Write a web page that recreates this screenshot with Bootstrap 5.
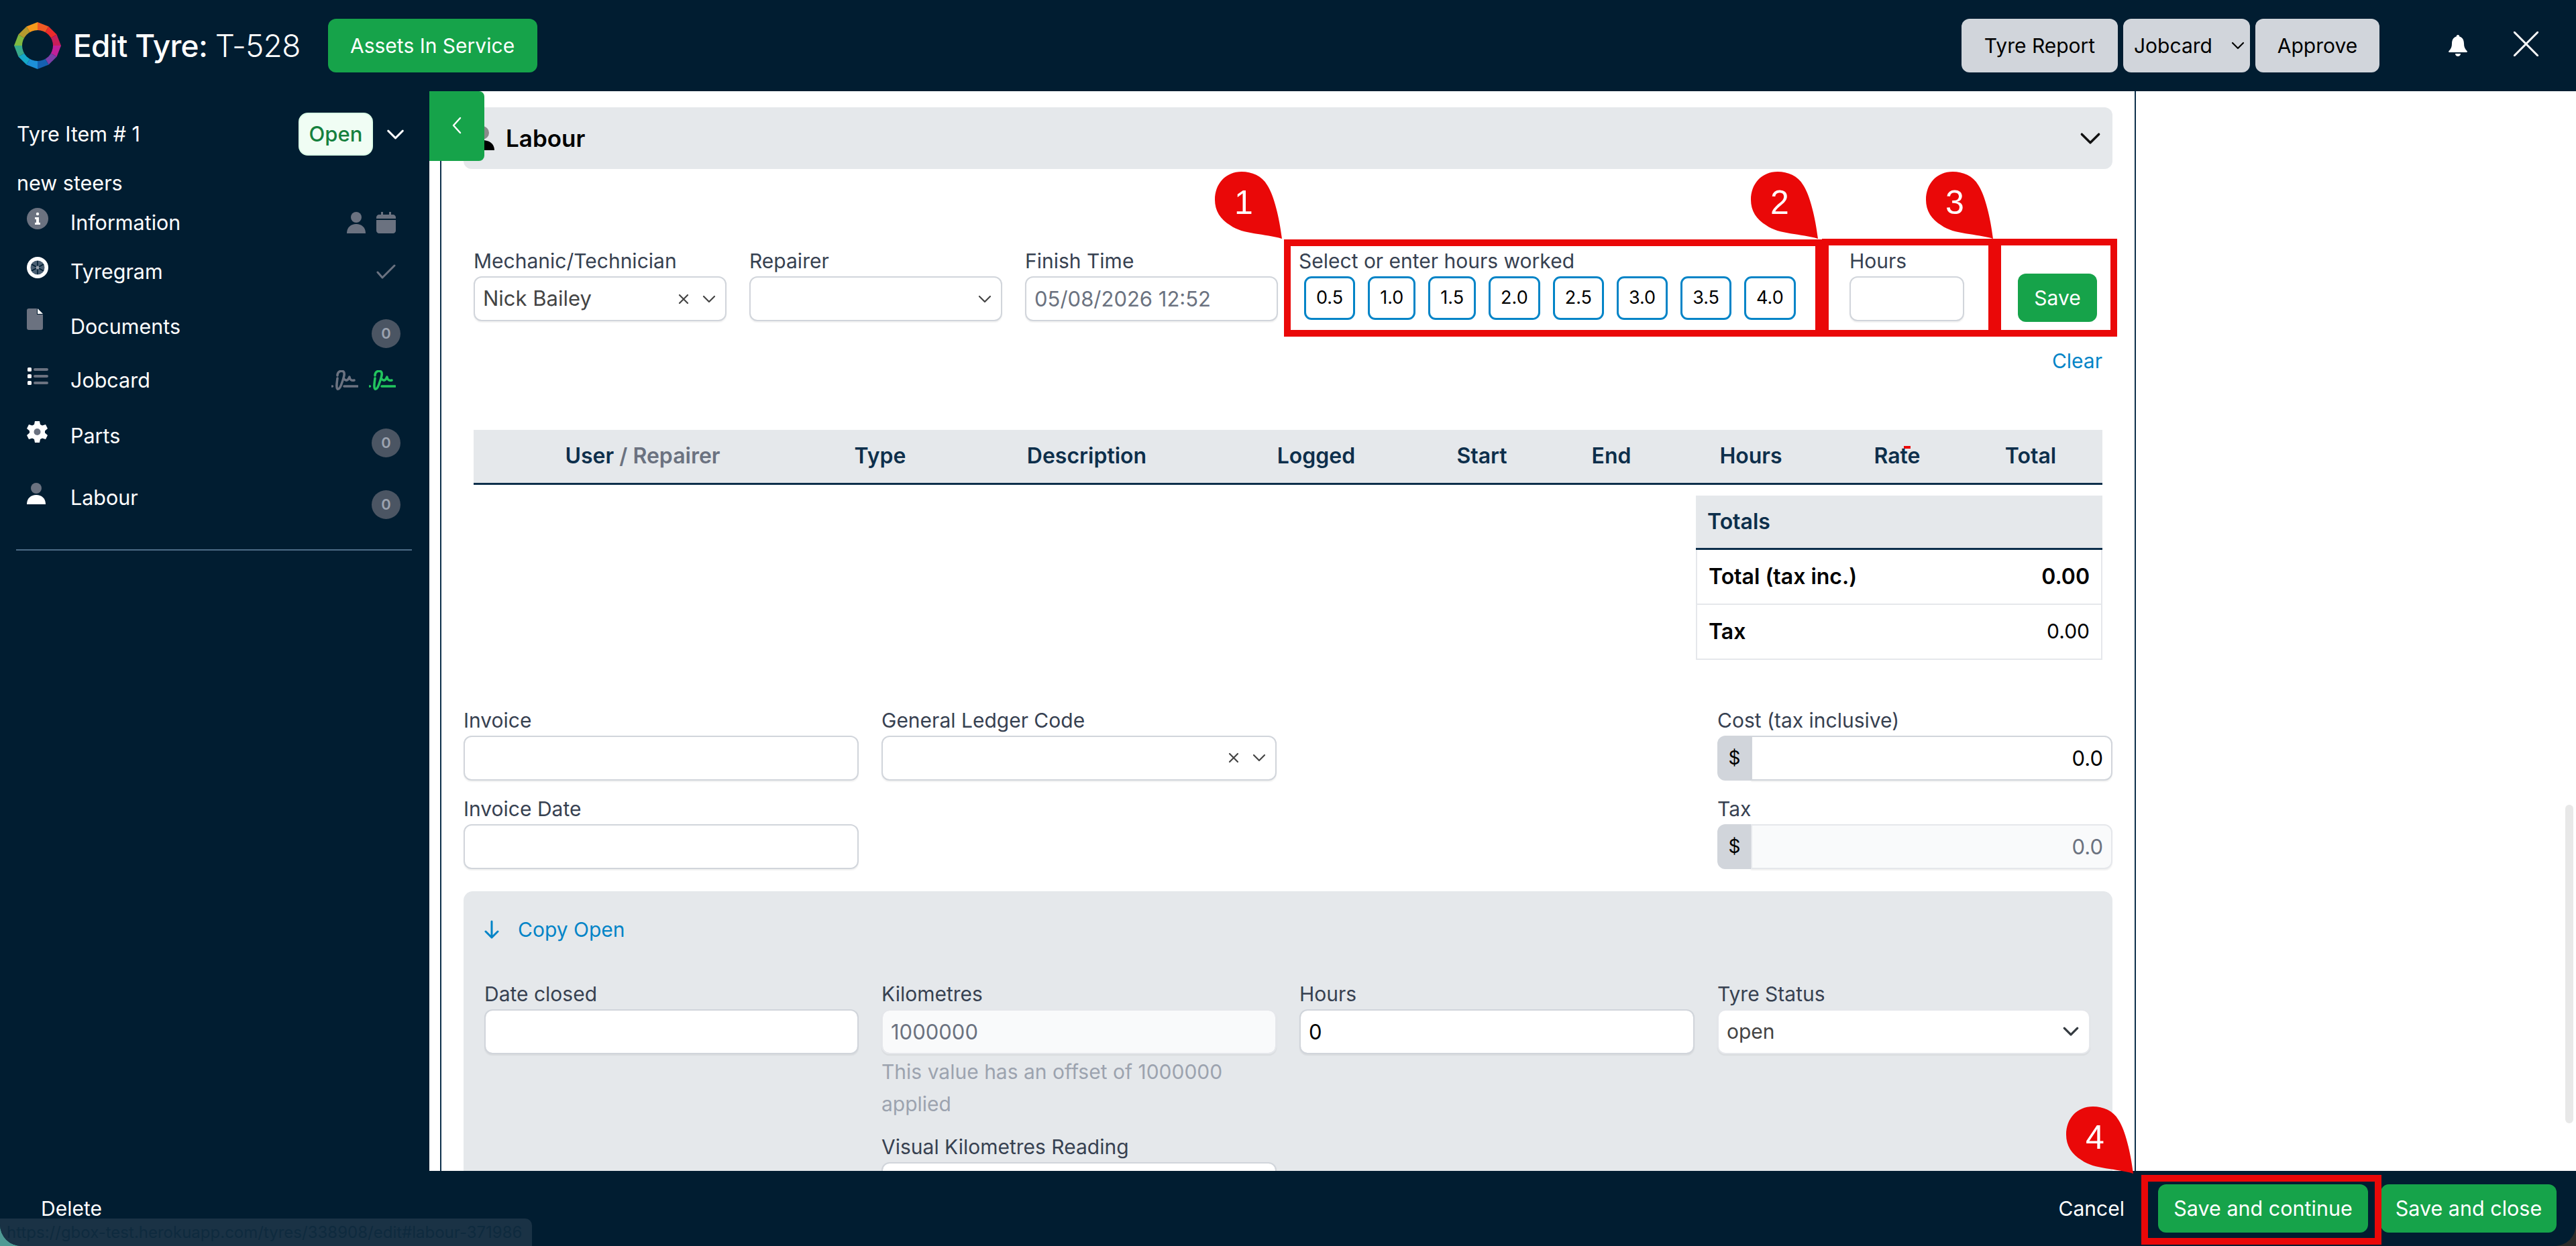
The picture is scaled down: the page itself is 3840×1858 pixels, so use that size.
<!DOCTYPE html>
<html>
<head>
    <meta charset="UTF-8">
    <title>Edit Tyre: T-528</title>
    <link href="https://cdn.jsdelivr.net/npm/bootstrap@5.3.0/dist/css/bootstrap.min.css" rel="stylesheet">
    <style>
        html, body { height: 100%; margin: 0; overflow: hidden; }
        body {
            background: linear-gradient(90deg, #4f9a94 0 50%, #2c2c2a 50% 100%);
            font-family: Inter, "Liberation Sans", sans-serif;
            font-size: 30px;
            color: #000;
        }
        .wk-app { position: relative; width: 3840px; height: 1858px; display: flex; flex-direction: column; overflow: hidden; border-radius: 0 0 32px 32px; background: #011d31; }

        /* header */
        .wk-top { height: 136px; flex: none; padding: 28px 56px 0 21px; color: #fff; }
        .wk-logo { width: 70px; height: 70px; margin-top: 5px; flex: none; }
        .wk-title { margin: 0 0 0 18px; font-size: 46px; font-weight: 500; line-height: 80px; letter-spacing: -.7px; }
        .wk-title span { font-weight: 300; }
        .wk-btn { height: 80px; border: 0; border-radius: 12px; font-size: 30px; padding: 0 24px; white-space: nowrap; }
        .wk-go { background: #16a34a; color: #fff; }
        .wk-go:hover { background: #16a34a; color: #fff; }
        .wk-grey { background: #d1d5db; color: #000; }
        .wk-grey:hover { background: #d1d5db; color: #000; }
        .wk-assets { margin-left: 41px; width: 312px; padding: 0; }
        .wk-report { width: 233px; padding: 0; }
        .wk-job { width: 189px; padding: 0 0 0 16px; }
        .wk-approve { width: 185px; padding: 0; }
        .wk-bell { margin: 24px 69px 0 103px; }
        .wk-x { margin-top: 19px; }

        /* sidebar */
        .wk-mid { flex: 1; display: flex; min-height: 0; }
        .wk-side { width: 640px; flex: none; color: #fff; padding: 32px 0 0 25px; font-size: 30.5px; }
        .wk-open { width: 111px; height: 64px; border-radius: 14px; background: #f0fdf4; border: 2px solid #dcfce7; color: #15803d; font-size: 31px; font-weight: 500; }
        .wk-itemhead { height: 64px; padding-right: 37px; }
        .wk-sub { margin-top: 20px; line-height: 42px; }
        .wk-items { margin: 8px 0 0; padding: 0; list-style: none; }
        .wk-items li { height: 60px; display: flex; align-items: center; padding: 0 43px 0 15px; }
        .wk-items li:nth-child(2) { margin-top: 13px; }
        .wk-items li:nth-child(3) { margin-top: 22px; }
        .wk-items li:nth-child(4) { margin-top: 20px; }
        .wk-items li:nth-child(5) { margin-top: 23px; }
        .wk-items li:nth-child(6) { margin-top: 32px; }
        .wk-ico { width: 65px; flex: none; margin-top: -12px; }
        .wk-ico svg { display: block; }
        .wk-ico-file { margin-top: -22px; }
        .wk-rt { margin-right: 7px; }
        .wk-tag { width: 43px; height: 43px; border-radius: 50%; background: #4b5563; color: #9ca3af; font-size: 22px; font-weight: 600; margin-top: 20px; }
        .wk-line { margin: 47px 26px 0 -1px; height: 2px; background: #4c6b85; }

        /* main */
        .wk-main { position: relative; flex: 1; overflow: hidden; background: #fff; }
        .wk-toggle { position: absolute; left: 0; top: 0; width: 82px; height: 104px; padding-top: 38px; background: #16a34a; border-radius: 0 8px 8px 0; z-index: 2; }
        .wk-paper { margin-left: 16px; width: 2528px; height: 2000px; border-left: 2px solid #0d2f4b; border-right: 2px solid #0d2f4b; padding: 24px 33px 0; }
        .wk-acc { height: 92px; background: #e5e8eb; border-radius: 12px; padding: 0 17px 0 10px; font-size: 35px; font-weight: 600; }
        .wk-acc-ico { margin-right: 17px; flex: none; }

        .wk-form { margin-top: 114px; padding-left: 15px; }
        .wk-fld { width: 377px; margin-right: 34px; }
        .wk-lab { display: block; margin: 0; height: 46px; line-height: 46px; color: #374151; font-size: 30px; white-space: nowrap; }
        .wk-in.form-control { height: 67px; border: 2px solid #d1d5db; border-radius: 12px; box-shadow: 0 2px 2px rgba(0,0,0,.06); font-size: 31px; padding: 0 12px; color: #000; background-color: #fff; }
        .wk-in.wk-off { background-color: #f9fafb; border-color: #e5e7eb; color: #6b7280; }
        .wk-in.wk-pale { color: #6b7280; }
        .wk-in.wk-mock { display: flex; align-items: center; color: #444; padding-right: 14px; }
        .wk-mock .wk-val { flex: 1; }
        .wk-mock svg { flex: none; margin-left: 20px; }
        .wk-hoursel { width: 821px; margin-left: -3px; }
        .wk-hrs { gap: 19px; padding-left: 8px; }
        .wk-hr { height: 65px; border: 3px solid #0284c7; border-radius: 11px; background: #fff; color: #000; font-size: 27px; padding: 0 15px; }
        .wk-hr:hover { background: #fff; color: #000; border-color: #0284c7; }
        .wk-hoursin { width: 171px; margin-right: 80px; }
        .wk-saveb { width: 118px; height: 72px; padding: 0; margin-top: 42px; }
        .wk-clear { margin-top: 38px; padding-right: 15px; line-height: 40px; text-align: right; }
        .wk-clear a, .wk-copy a { color: #0284c7; text-decoration: none; }

        .wk-tbl { margin: 83px 15px 0; width: calc(100% - 30px); table-layout: fixed; color: #0d2f4b; }
        .wk-tbl th { height: 80px; background: #e5e8eb; border-bottom: 3px solid #0d2f4b; text-align: center; vertical-align: middle; font-weight: 600; padding: 0; font-size: 32px; }
        .wk-tbl th span { color: #6b7280; }
        .wk-w1 { width: 504px; } .wk-w2 { width: 204px; } .wk-w3 { width: 412px; } .wk-w4 { width: 272px; } .wk-w5 { width: 222px; }
        .wk-w6 { width: 164px; } .wk-w7 { width: 252px; } .wk-w8 { width: 184px; } .wk-w9 { width: 214px; }

        .wk-totals { margin: 16px 15px 0 auto; width: 606px; font-size: 30px; }
        .wk-tothead { height: 81px; padding: 0 17px; background: #e5e8eb; border-bottom: 3px solid #0d2f4b; color: #0d2f4b; font-weight: 600; font-size: 32px; }
        .wk-totrow { height: 82px; padding: 0 17px; border: 2px solid #e5e7eb; border-top: 0; }
        .wk-totrow b { font-weight: 600; font-size: 32px; }

        .wk-costs { margin-top: 67px; --bs-gutter-x: 34px; --bs-gutter-y: 0; }
        .wk-rowgap { margin-top: 19px; }
        .wk-pre.input-group-text { width: 51px; justify-content: center; padding: 0; background: #d1d5db; border: 0; border-radius: 12px 0 0 12px; color: #000; font-size: 28px; }
        .wk-in.wk-num { text-align: right; }
        .wk-group .wk-in.form-control { border-radius: 0 12px 12px 0; }

        .wk-panel { margin-top: 33px; height: 600px; padding-top: 37px; background: #e5e8eb; border-radius: 14px; }
        .wk-copy { padding-left: 31px; line-height: 40px; }
        .wk-copy svg { margin-right: 28px; }
        .wk-panelrow { margin: 53px -17px 0; --bs-gutter-x: 34px; --bs-gutter-y: 0; }
        .wk-panelrow .wk-first { padding-left: 48px; }
        .wk-panelrow .wk-last { padding-right: 50px; }
        .wk-help { margin: 2px 0 0; line-height: 48px; color: #9ca3af; font-size: 30px; }
        .wk-below { margin-top: 17px; }
        .wk-sel.form-select { height: 67px; border: 2px solid #e5e7eb; border-radius: 12px; font-size: 30px; padding: 0 50px 0 12px; color: #444; background-size: 26px; background-position: right 14px center; box-shadow: 0 2px 2px rgba(0,0,0,.06); }

        /* footer */
        .wk-foot { height: 112px; flex: none; padding: 20px 29px 0 61px; color: #fff; }
        .wk-foot .wk-btn { height: 72px; padding: 0; font-size: 30.5px; }
        .wk-cont { width: 313px; margin: 0 19px 0 50px; }
        .wk-close { width: 262px; }
        .wk-link { line-height: 72px; }
        .wk-status { position: absolute; left: 0; bottom: 0; width: 793px; height: 41px; line-height: 41px; padding-left: 10px; border-radius: 0 10px 0 0; background: #1a3245; color: #0e2a3e; font-size: 24px; white-space: nowrap; z-index: 4; }
        .wk-thumb { position: absolute; left: 3824px; top: 1200px; width: 12px; height: 475px; border-radius: 6px; background: #e8e8e8; }

        /* red callouts drawn on top of the screenshot */
        .wk-box { position: absolute; border: 10px solid #ea0808; z-index: 5; }
        .wk-b1 { left: 1914px; top: 357px; width: 802px; height: 145px; }
        .wk-b2 { left: 2716px; top: 356px; width: 258px; height: 146px; }
        .wk-b3 { left: 2973px; top: 356px; width: 183px; height: 146px; }
        .wk-b4 { left: 3192px; top: 1752px; width: 358px; height: 104px; }
        .wk-pin { position: absolute; width: 100px; height: 100px; z-index: 6; }
        .wk-pin text { font-family: "Liberation Sans", sans-serif; font-size: 50px; fill: #fff; text-anchor: middle; }
        .wk-p1 { left: 1811px; top: 256px; }
        .wk-p2 { left: 2610px; top: 256px; }
        .wk-p3 { left: 2871px; top: 256px; }
        .wk-p4 { left: 3080px; top: 1650px; }
        .wk-speck { position: absolute; left: 2838px; top: 665px; width: 10px; height: 4px; background: #ea0808; z-index: 5; }
    </style>
</head>
<body>
<svg width="0" height="0" class="position-absolute">
    <defs>
        <symbol id="chev" viewBox="0 0 20 12"><path d="M2 2l8 8 8-8" fill="none" stroke="currentColor" stroke-width="2.200" stroke-linecap="round" stroke-linejoin="round"/></symbol>
        <symbol id="cross" viewBox="0 0 16 16"><path d="M2 2l12 12M14 2L2 14" fill="none" stroke="currentColor" stroke-width="2.200" stroke-linecap="round"/></symbol>
        <symbol id="pinshape" viewBox="0 0 100 100"><path d="M100 100C96 68 88 35 78 20 70 6 55 0 40 0 16 0 0 18 0 42c0 16 8 29 23 38 19 14 52 12 77 20z" fill="#ea0808"/></symbol>
        <symbol id="sign" viewBox="0 0 40 30"><path d="M1 24h.5M9 8C9 2 14 0 18 2c3 3 0 10-2 16-2 6-4 11-7 10-2-2-1-8 0-16M19 13c3 4 6 2 8-3 0 4 3 6 7 5M19 24h20" fill="none" stroke="currentColor" stroke-width="3.500" stroke-linecap="round" stroke-linejoin="round"/></symbol>
    </defs>
</svg>

<div class="wk-app">
    <header class="wk-top d-flex align-items-start">
        <svg class="wk-logo" viewBox="0 0 70 70">
            <polygon points="35,35 35,0 51.5,6.4" fill="#ef5a24"/>
            <polygon points="35,35 51.5,6.4 63.6,18.5" fill="#ee2b2b"/>
            <polygon points="35,35 63.6,18.5 70,35" fill="#c81e5a"/>
            <polygon points="35,35 70,35 63.6,51.5" fill="#c0209a"/>
            <polygon points="35,35 63.6,51.5 51.5,63.6" fill="#7a3fa8"/>
            <polygon points="35,35 51.5,63.6 35,70" fill="#1560b0"/>
            <polygon points="35,35 35,70 18.5,63.6" fill="#1d8fd8"/>
            <polygon points="35,35 18.5,63.6 6.4,51.5" fill="#15a8c8"/>
            <polygon points="35,35 6.4,51.5 0,35" fill="#38a98a"/>
            <polygon points="35,35 0,35 6.4,18.5" fill="#7fb841"/>
            <polygon points="35,35 6.4,18.5 18.5,6.4" fill="#b59a2e"/>
            <polygon points="35,35 18.5,6.4 35,0" fill="#f59a1c"/>
            <circle cx="35" cy="35" r="23" fill="#011d31"/>
        </svg>
        <h1 class="wk-title">Edit Tyre: <span>T-528</span></h1>
        <button class="btn wk-btn wk-go wk-assets">Assets In Service</button>
        <div class="ms-auto d-flex align-items-start gap-2">
            <button class="btn wk-btn wk-grey wk-report">Tyre Report</button>
            <button class="btn wk-btn wk-grey wk-job d-flex align-items-center text-start">Jobcard
                <svg class="ms-auto me-2" width="20" height="12"><use href="#chev"/></svg>
            </button>
            <button class="btn wk-btn wk-grey wk-approve">Approve</button>
        </div>
        <svg class="wk-bell" width="28" height="32" viewBox="0 0 28 32" fill="#fff">
            <path d="M14 0c1.500 0 2.300 1 2.300 2.500C21 3.800 23 8 23 13c0 5 1.500 8 4.500 11 .8 1 .3 2-1 2H1.500c-1.300 0-1.800-1-1-2C3.500 21 5 18 5 13c0-5 2-9.200 6.700-10.500C11.700 1 12.500 0 14 0zM10 28h8c0 2.500-2 4-4 4s-4-1.500-4-4z"/>
        </svg>
        <svg class="wk-x" width="37" height="37" viewBox="0 0 37 37"><path d="M1 1l35 35M36 1L1 36" stroke="#fff" stroke-width="3" stroke-linecap="round"/></svg>
    </header>

    <div class="wk-mid">
        <aside class="wk-side">
            <div class="wk-itemhead d-flex align-items-center">
                <span class="me-auto">Tyre Item # 1</span>
                <span class="wk-open d-flex align-items-center justify-content-center">Open</span>
                <svg class="ms-3 ps-1" width="31" height="17"><use href="#chev"/></svg>
            </div>
            <div class="wk-sub">new steers</div>
            <ul class="wk-items">
                <li>
                    <span class="wk-ico"><svg width="32" height="32" viewBox="0 0 32 32"><circle cx="16" cy="16" r="16" fill="#6b7280"/><circle cx="16" cy="9" r="2.200" fill="#fff"/><path d="M12 14h6v8h2v3h-8v-3h2v-5h-2z" fill="#fff"/></svg></span>
                    <span class="me-auto">Information</span>
                    <svg class="me-3" width="28" height="32" viewBox="0 0 28 32" fill="#6b7280"><circle cx="14" cy="8" r="8"/><path d="M0 32c0-9 6-14 14-14s14 5 14 14z"/></svg>
                    <svg class="wk-rt" width="29" height="32" viewBox="0 0 29 32" fill="#6b7280"><path d="M7 0h3v4h9V0h3v4h3c2 0 4 2 4 4v2H0V8c0-2 2-4 4-4h3zM0 12h29v16c0 2-2 4-4 4H4c-2 0-4-2-4-4z"/></svg>
                </li>
                <li>
                    <span class="wk-ico"><svg width="32" height="32" viewBox="0 0 32 32"><circle cx="16" cy="16" r="16" fill="#fff"/><circle cx="16" cy="16" r="10.500" fill="#4b5f73"/><path d="M16 6v20M7 11l18 10M25 11L7 21" stroke="#011d31" stroke-width="1.500"/><circle cx="16" cy="16" r="2.500" fill="#9ca3af"/></svg></span>
                    <span class="me-auto">Tyregram</span>
                    <svg class="wk-rt" width="29" height="22" viewBox="0 0 29 22"><path d="M2 12l7 8L27 2" fill="none" stroke="#6b7280" stroke-width="3" stroke-linecap="round" stroke-linejoin="round"/></svg>
                </li>
                <li>
                    <span class="wk-ico wk-ico-file"><svg width="24" height="32" viewBox="0 0 24 32"><path d="M3 0h12v9h9v20c0 2-1 3-3 3H3c-2 0-3-1-3-3V3c0-2 1-3 3-3z" fill="#6b7280"/><path d="M16 0l8 8h-8z" fill="#fff"/></svg></span>
                    <span class="me-auto">Documents</span>
                    <span class="wk-tag d-flex align-items-center justify-content-center">0</span>
                </li>
                <li>
                    <span class="wk-ico"><svg width="32" height="26" viewBox="0 0 32 26"><rect x="1" y="0" width="6" height="6" rx="1.500" fill="#fff"/><rect x="1" y="10" width="6" height="6" rx="1.500" fill="#fff"/><rect x="1" y="20" width="6" height="6" rx="1.500" fill="#fff"/><rect x="10" y="1" width="22" height="4" rx="2" fill="#6b7280"/><rect x="10" y="11" width="22" height="4" rx="2" fill="#6b7280"/><rect x="10" y="21" width="22" height="4" rx="2" fill="#6b7280"/></svg></span>
                    <span class="me-auto">Jobcard</span>
                    <svg class="me-3" width="40" height="30" color="#6b7280"><use href="#sign"/></svg>
                    <svg class="wk-rt" width="40" height="30" color="#22c55e"><use href="#sign"/></svg>
                </li>
                <li>
                    <span class="wk-ico"><svg width="31" height="32" viewBox="0 0 31 32"><path d="M12 0h7l1 5 3 1.500 5-1.500 3 6-4 3.500v3l4 3.500-3 6-5-1.500-3 1.500-1 5h-7l-1-5-3-1.500-5 1.500-3-6 4-3.500v-3l-4-3.500 3-6 5 1.500 3-1.500z" fill="#fff"/><circle cx="15.500" cy="16" r="5" fill="#6b7280"/></svg></span>
                    <span class="me-auto">Parts</span>
                    <span class="wk-tag d-flex align-items-center justify-content-center">0</span>
                </li>
                <li>
                    <span class="wk-ico"><svg width="28" height="32" viewBox="0 0 28 32"><circle cx="14" cy="8" r="8" fill="#6b7280"/><path d="M0 32c0-9 6-14 14-14s14 5 14 14z" fill="#fff"/></svg></span>
                    <span class="me-auto">Labour</span>
                    <span class="wk-tag d-flex align-items-center justify-content-center">0</span>
                </li>
            </ul>
            <div class="wk-line"></div>
        </aside>

        <main class="wk-main">
            <div class="wk-toggle d-flex align-items-start justify-content-center">
                <svg width="14" height="26" viewBox="0 0 14 26"><path d="M12 2L2 13l10 11" fill="none" stroke="#fff" stroke-width="2.500" stroke-linecap="round" stroke-linejoin="round"/></svg>
            </div>
            <div class="wk-paper">
                <div class="wk-acc d-flex align-items-center">
                    <svg class="wk-acc-ico" width="36" height="36" viewBox="0 0 36 36"><circle cx="18" cy="10" r="10" fill="#8a8a8a"/><path d="M0 36c0-10 8-15 18-15s18 5 18 15z" fill="#000"/></svg>
                    <span class="me-auto">Labour</span>
                    <svg width="32" height="19" color="#111"><use href="#chev"/></svg>
                </div>

                <div class="wk-form d-flex align-items-start">
                    <div class="wk-fld">
                        <label class="wk-lab">Mechanic/Technician</label>
                        <div class="form-control wk-in wk-mock">
                            <span class="wk-val">Nick Bailey</span>
                            <svg width="16" height="16"><use href="#cross"/></svg>
                            <svg width="20" height="12"><use href="#chev"/></svg>
                        </div>
                    </div>
                    <div class="wk-fld">
                        <label class="wk-lab">Repairer</label>
                        <div class="form-control wk-in wk-mock">
                            <span class="wk-val"></span>
                            <svg width="20" height="12"><use href="#chev"/></svg>
                        </div>
                    </div>
                    <div class="wk-fld">
                        <label class="wk-lab">Finish Time</label>
                        <input class="form-control wk-in wk-pale" value="05/08/2026 12:52">
                    </div>
                    <div class="wk-hoursel">
                        <label class="wk-lab">Select or enter hours worked</label>
                        <div class="wk-hrs d-flex">
                            <button class="btn wk-hr">0.5</button>
                            <button class="btn wk-hr">1.0</button>
                            <button class="btn wk-hr">1.5</button>
                            <button class="btn wk-hr">2.0</button>
                            <button class="btn wk-hr">2.5</button>
                            <button class="btn wk-hr">3.0</button>
                            <button class="btn wk-hr">3.5</button>
                            <button class="btn wk-hr">4.0</button>
                        </div>
                    </div>
                    <div class="wk-hoursin">
                        <label class="wk-lab">Hours</label>
                        <input class="form-control wk-in">
                    </div>
                    <button class="btn wk-btn wk-go wk-saveb">Save</button>
                </div>

                <div class="wk-clear"><a href="#">Clear</a></div>

                <table class="wk-tbl">
                    <thead>
                        <tr>
                            <th class="wk-w1">User <span>/ Repairer</span></th>
                            <th class="wk-w2">Type</th>
                            <th class="wk-w3">Description</th>
                            <th class="wk-w4">Logged</th>
                            <th class="wk-w5">Start</th>
                            <th class="wk-w6">End</th>
                            <th class="wk-w7">Hours</th>
                            <th class="wk-w8">Rate</th>
                            <th class="wk-w9">Total</th>
                        </tr>
                    </thead>
                </table>

                <div class="wk-totals">
                    <div class="wk-tothead d-flex align-items-center">Totals</div>
                    <div class="wk-totrow d-flex align-items-center justify-content-between"><b>Total (tax inc.)</b><b>0.00</b></div>
                    <div class="wk-totrow d-flex align-items-center justify-content-between"><b>Tax</b><span>0.00</span></div>
                </div>

                <div class="row wk-costs">
                    <div class="col-3">
                        <label class="wk-lab">Invoice</label>
                        <input class="form-control wk-in">
                    </div>
                    <div class="col-3">
                        <label class="wk-lab">General Ledger Code</label>
                        <div class="form-control wk-in wk-mock">
                            <span class="wk-val"></span>
                            <svg width="16" height="16"><use href="#cross"/></svg>
                            <svg width="20" height="12"><use href="#chev"/></svg>
                        </div>
                    </div>
                    <div class="col-3"></div>
                    <div class="col-3">
                        <label class="wk-lab">Cost (tax inclusive)</label>
                        <div class="input-group wk-group">
                            <span class="input-group-text wk-pre">$</span>
                            <input class="form-control wk-in wk-num" value="0.0">
                        </div>
                    </div>
                    <div class="col-3 wk-rowgap">
                        <label class="wk-lab">Invoice Date</label>
                        <input class="form-control wk-in">
                    </div>
                    <div class="col-3 offset-6 wk-rowgap">
                        <label class="wk-lab">Tax</label>
                        <div class="input-group wk-group">
                            <span class="input-group-text wk-pre">$</span>
                            <input class="form-control wk-in wk-num wk-off" value="0.0">
                        </div>
                    </div>
                </div>

                <div class="wk-panel">
                    <div class="wk-copy d-flex align-items-center">
                        <svg width="22" height="28" viewBox="0 0 22 28"><path d="M11 2v24M2 17l9 9 9-9" fill="none" stroke="#0284c7" stroke-width="3" stroke-linecap="round" stroke-linejoin="round"/></svg>
                        <a href="#">Copy Open</a>
                    </div>
                    <div class="row wk-panelrow">
                        <div class="col-3 wk-first">
                            <label class="wk-lab">Date closed</label>
                            <input class="form-control wk-in">
                        </div>
                        <div class="col-3">
                            <label class="wk-lab">Kilometres</label>
                            <input class="form-control wk-in wk-off" value="1000000">
                            <p class="wk-help">This value has an offset of 1000000 applied</p>
                            <label class="wk-lab wk-below">Visual Kilometres Reading</label>
                            <input class="form-control wk-in">
                        </div>
                        <div class="col-3">
                            <label class="wk-lab">Hours</label>
                            <input class="form-control wk-in" value="0">
                        </div>
                        <div class="col-3 wk-last">
                            <label class="wk-lab">Tyre Status</label>
                            <select class="form-select wk-sel"><option>open</option></select>
                        </div>
                    </div>
                </div>
            </div>
        </main>
    </div>

    <footer class="wk-foot d-flex align-items-start">
        <span class="wk-link me-auto">Delete</span>
        <span class="wk-link">Cancel</span>
        <button class="btn wk-btn wk-go wk-cont">Save and continue</button>
        <button class="btn wk-btn wk-go wk-close">Save and close</button>
    </footer>

    <div class="wk-status">https://gbox-test.herokuapp.com/tyres/338908/edit#labour-371986</div>
    <div class="wk-thumb"></div>

    <div class="wk-box wk-b1"></div>
    <div class="wk-box wk-b2"></div>
    <div class="wk-box wk-b3"></div>
    <div class="wk-box wk-b4"></div>
    <div class="wk-speck"></div>
    <svg class="wk-pin wk-p1" viewBox="0 0 100 100"><use href="#pinshape"/><text x="43" y="63">1</text></svg>
    <svg class="wk-pin wk-p2" viewBox="0 0 100 100"><use href="#pinshape"/><text x="43" y="63">2</text></svg>
    <svg class="wk-pin wk-p3" viewBox="0 0 100 100"><use href="#pinshape"/><text x="43" y="63">3</text></svg>
    <svg class="wk-pin wk-p4" viewBox="0 0 100 100"><use href="#pinshape"/><text x="43" y="63">4</text></svg>
</div>

<script src="https://cdn.jsdelivr.net/npm/bootstrap@5.3.0/dist/js/bootstrap.bundle.min.js"></script>
</body>
</html>
